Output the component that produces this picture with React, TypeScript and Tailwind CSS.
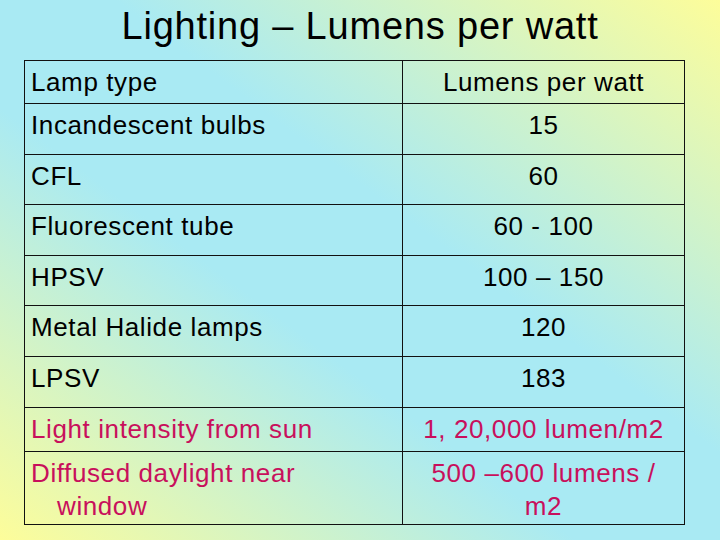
const ROWS: { lamp: string[]; value: string[]; h: string; red?: boolean }[] = [
  { lamp: ['Lamp type'], value: ['Lumens per watt'], h: 'h-[43px]' },
  { lamp: ['Incandescent bulbs'], value: ['15'], h: 'h-[51px]' },
  { lamp: ['CFL'], value: ['60'], h: 'h-[50px]' },
  { lamp: ['Fluorescent tube'], value: ['60 - 100'], h: 'h-[51px]' },
  { lamp: ['HPSV'], value: ['100 – 150'], h: 'h-[50px]' },
  { lamp: ['Metal Halide lamps'], value: ['120'], h: 'h-[51px]' },
  { lamp: ['LPSV'], value: ['183'], h: 'h-[51px]' },
  { lamp: ['Light intensity from sun'], value: ['1, 20,000 lumen/m2'], h: 'h-[44px]', red: true },
  {
    lamp: ['Diffused daylight near', 'window'],
    value: ['500 –600 lumens /', 'm2'],
    h: 'h-[72px]',
    red: true,
  },
];

export default function App() {
  return (
    <div className="h-[540px] w-[720px] overflow-hidden bg-[linear-gradient(to_top_right,#fdfd9a_0%,#a9eaf3_40%,#a9eaf3_58%,#fdfd9a_100%)] font-['Liberation_Sans',Arial,sans-serif] text-black">
      <h1 className="h-[60px] pt-[4px] text-center text-[38px] leading-[44px] font-normal tracking-[0.8px]">
        Lighting – Lumens per watt
      </h1>

      <div className="ml-[24px] grid w-[661px] grid-cols-[378px_281px] border border-[#111]">
        {ROWS.map((row, i) => {
          const last = i === ROWS.length - 1;
          const color = row.red ? 'text-[#c8105c]' : 'text-black';
          return (
            <div key={i} className="contents">
              <div
                className={`${row.h} ${last ? '' : 'border-b'} border-r border-[#111] pl-[6px] pt-[5px] text-[26px] leading-[33px] tracking-[0.6px] ${color}`}
              >
                {row.lamp.map((line, j) => (
                  <div key={j} className={j > 0 ? 'pl-[26px]' : ''}>
                    {line}
                  </div>
                ))}
              </div>
              <div
                className={`${row.h} ${last ? '' : 'border-b'} border-[#111] pt-[5px] text-center text-[26px] leading-[33px] tracking-[0.6px] ${color}`}
              >
                {row.value.map((line, j) => (
                  <div key={j}>{line}</div>
                ))}
              </div>
            </div>
          );
        })}
      </div>
    </div>
  );
}
